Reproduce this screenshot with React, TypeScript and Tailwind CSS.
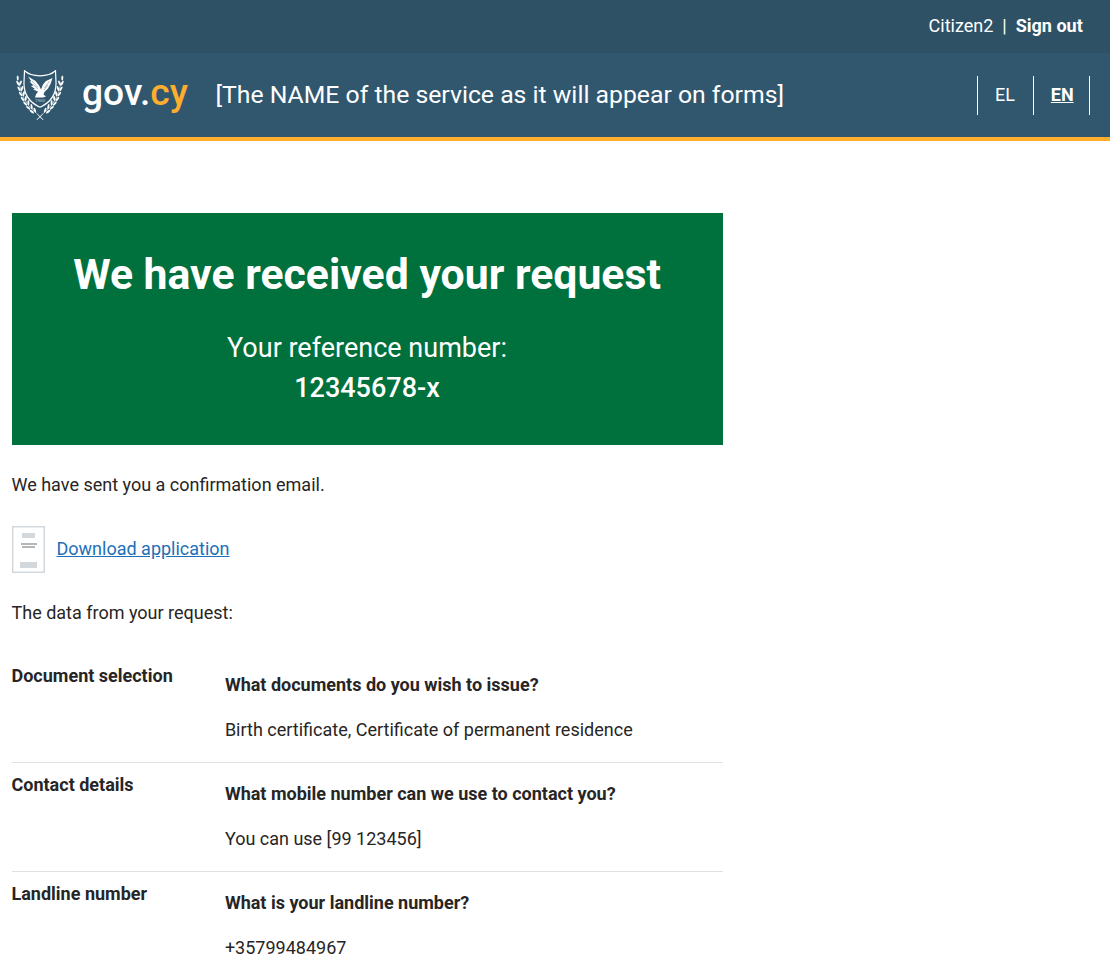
type Leaf = [number, number, number];

const leaves: Leaf[] = [
  [1.7, 8, 88], [1.8, 13.2, 65], [4.5, 13, 112], [3, 18.8, 60], [6, 18.5, 108],
  [4.6, 24, 55], [7.8, 23.6, 102], [6.6, 29, 50], [9.8, 28.4, 96], [9.2, 33.6, 46],
  [12.4, 32.6, 88], [12.2, 37.8, 40], [15.6, 36.6, 78], [15.8, 41.6, 36], [18.8, 40.2, 70],
];

function Branch() {
  return (
    <g>
      {leaves.map(([x, y, angle], i) => (
        <ellipse key={i} cx={x} cy={y} rx="2.600" ry="1" transform={`rotate(${angle} ${x} ${y})`} fill="white" />
      ))}
      <path d="M3 12C5 25 11 36.500 20 42.500L27 49.500" fill="none" stroke="white" strokeWidth="0.600" />
      <path d="M21.500 44.500L27 50" fill="none" stroke="white" strokeWidth="0.600" />
    </g>
  );
}

function Emblem() {
  return (
    <svg width="48" height="51" viewBox="0 0 48 51" className="shrink-0">
      <Branch />
      <g transform="translate(48 0) scale(-1 1)">
        <Branch />
      </g>
      <path d="M8.500 0.800C12 4 16 5.800 24 5.800S36 4 39.500 0.800L40 12C40.500 25 34.500 32.500 24 37.200C13.500 32.500 7.500 25 8 12Z" fill="#31576f" stroke="white" strokeWidth="1.200" />
      <path d="M12 6.500L19.500 11L23 15.500L25 19.500L27 14.500L30 11L36.500 8L34.500 14L32 18.500L28.500 22L27.500 24.500L30 26.500L27 27.500L19 27.500L20 24.500L22 21.500L17 19.500L19 19L15 16L17.500 15.500L13.500 11.500L15.500 11.500Z" fill="white" />
      <path d="M16 11L22 17.500M17.500 15L22 19M33.500 11L28.500 18M32 15L28 20" stroke="#31576f" strokeWidth="0.400" />
      <text x="24" y="32" textAnchor="middle" fontSize="4.400" fill="white" fillOpacity="0.700" fontFamily="Roboto, sans-serif">1960</text>
    </svg>
  );
}

function DocumentIcon() {
  return (
    <svg width="33" height="47" viewBox="0 0 33 47" className="mr-px shrink-0">
      <rect x="0.750" y="0.750" width="31.500" height="45.500" fill="white" stroke="#d3d8dc" strokeWidth="1.500" />
      <rect x="10" y="7" width="13" height="5" fill="#d3d8dc" />
      <rect x="9" y="17" width="16" height="2" fill="#b3b7ba" />
      <rect x="10" y="20" width="13" height="2" fill="#b3b7ba" />
      <rect x="8" y="36" width="17" height="6" fill="#d3d8dc" />
    </svg>
  );
}

const summary = [
  { section: "Document selection", question: "What documents do you wish to issue?", answer: "Birth certificate, Certificate of permanent residence" },
  { section: "Contact details", question: "What mobile number can we use to contact you?", answer: "You can use [99 123456]" },
  { section: "Landline number", question: "What is your landline number?", answer: "+35799484967" },
];

export default function App() {
  return (
    <div className="h-[966px] overflow-hidden bg-white font-['Roboto',sans-serif] text-[18px] leading-[27px] text-[#272525]">
      <div className="flex h-[53px] items-center justify-end bg-[#2e5166] pb-0.5 pr-[27.25px] text-white">
        <span>Citizen2</span>
        <span className="mx-[9px]">|</span>
        <a className="font-bold">Sign out</a>
      </div>
      <header className="flex h-[88px] items-center border-b-4 border-[#ffad2d] bg-[#31576f] pl-4 pr-5 text-white">
        <Emblem />
        <span className="ml-[18px] w-[106px] whitespace-nowrap pb-[7px] text-[37.2px] font-medium leading-[40px]">
          gov.<span className="text-[#ffad2d]">cy</span>
        </span>
        <span className="ml-[27.5px] whitespace-nowrap pb-0.5 text-[24.75px] leading-[37px]">[The NAME of the service as it will appear on forms]</span>
        <nav className="ml-auto flex h-[39px] items-center border-x border-white">
          <a className="w-[55px] pb-0.5 pr-px text-center">EL</a>
          <a className="flex h-full w-[56px] items-center justify-center border-l border-white pb-0.5 pl-[1.5px] font-bold underline">EN</a>
        </nav>
      </header>
      <main className="w-[722.500px] pl-[11.500px] pt-[72px]">
        <section className="flex h-[232px] flex-col bg-[#00703c] pt-[34px] text-center text-white">
          <h1 className="text-[42.750px] font-bold leading-[54px]">We have received your request</h1>
          <p className="mt-[27px] text-[27px] leading-[40px]">
            Your reference number:
            <br />
            <span className="font-medium">12345678-x</span>
          </p>
        </section>
        <p className="mt-[26px]">We have sent you a confirmation email.</p>
        <div className="mt-[28px] flex h-[47px] items-center gap-[11px]">
          <DocumentIcon />
          <a className="pb-0.5 text-[#1d70b8] underline">Download application</a>
        </div>
        <p className="mt-[26px]">The data from your request:</p>
        <dl className="mt-[28px]">
          {summary.map((row) => (
            <div key={row.section} className="flex h-[109px] border-b border-[#dee2e6]">
              <dt className="w-[213.4px] pt-[8px] font-bold">{row.section}</dt>
              <dd className="pt-[17px]">
                <div className="font-bold">{row.question}</div>
                <div className="mt-[18px]">{row.answer}</div>
              </dd>
            </div>
          ))}
        </dl>
      </main>
    </div>
  );
}
